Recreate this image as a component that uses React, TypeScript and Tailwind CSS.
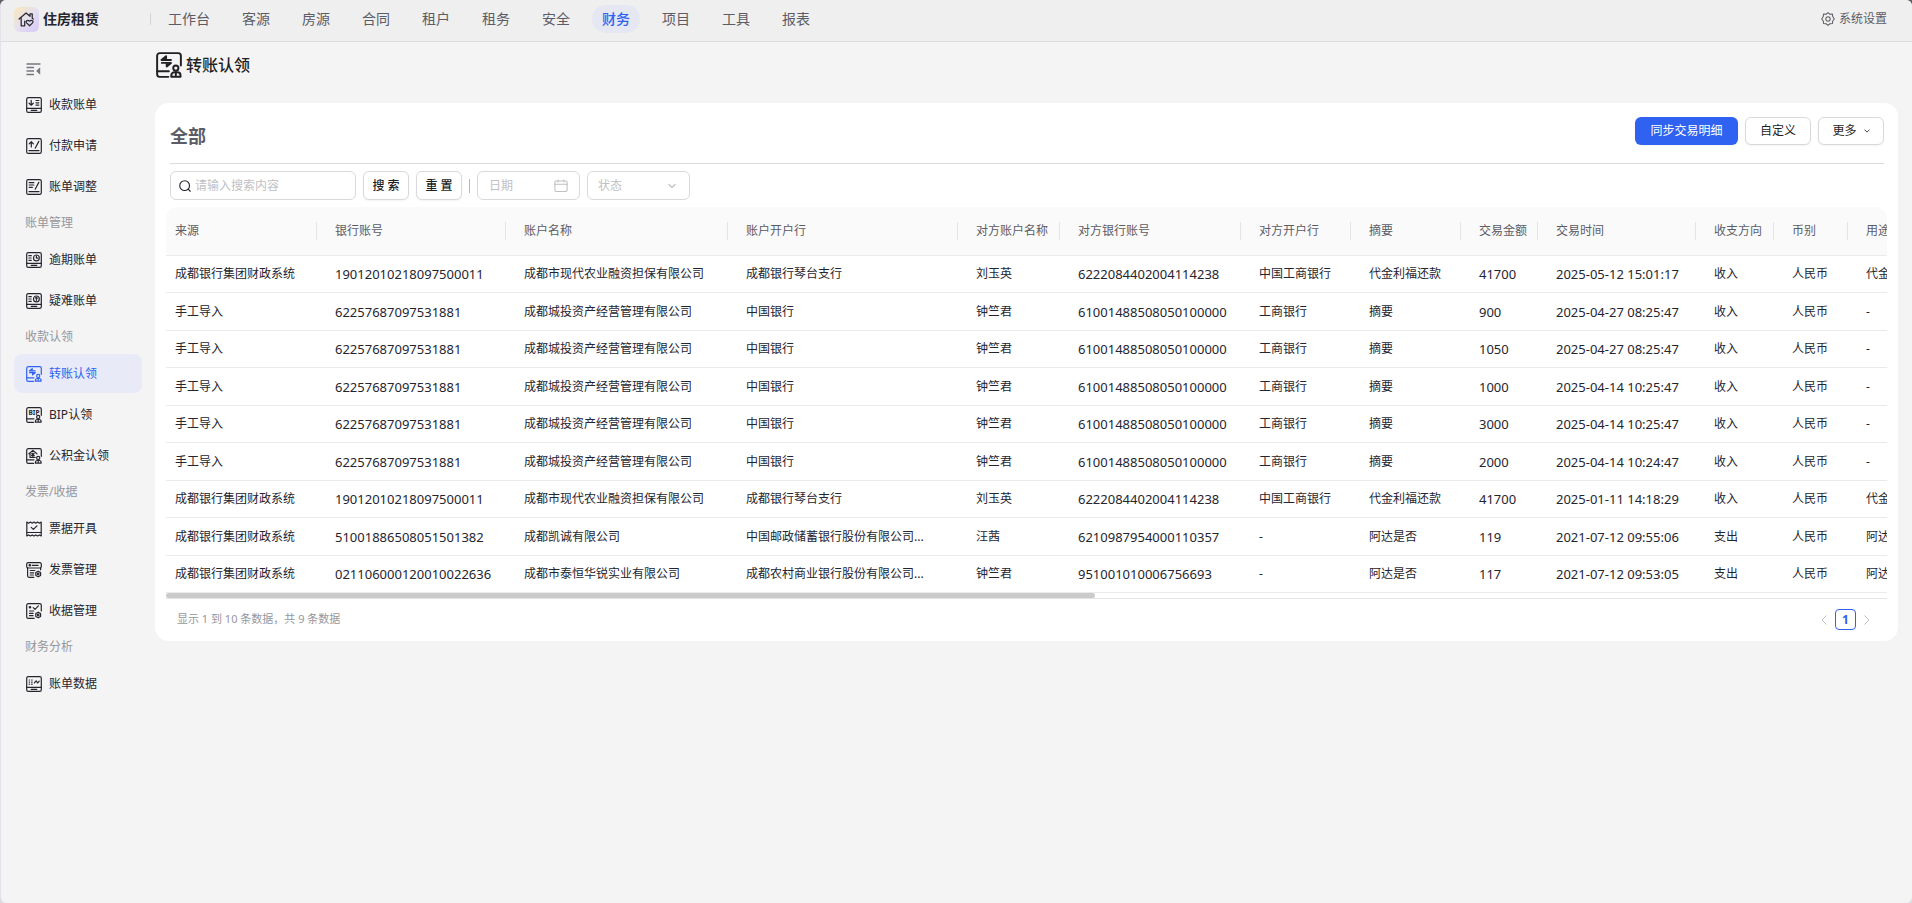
import React from "react";

interface IconProps {
  className?: string;
}

type IconComponent = React.FC<IconProps>;

interface MenuItem {
  label: string;
  icon: IconComponent;
  active?: boolean;
}

interface MenuGroup {
  title?: string;
  items: MenuItem[];
}

// Base for the line icons, drawn on a 16 unit grid
const Svg: React.FC<IconProps & { children: React.ReactNode }> = ({ className, children }) => (
  <svg
    viewBox="0 0 16 16"
    fill="none"
    stroke="currentColor"
    strokeWidth="1.2"
    strokeLinecap="round"
    strokeLinejoin="round"
    aria-hidden="true"
    className={className}
  >
    {children}
  </svg>
);

const BillFrame = () => (
  <>
    <rect x="0.7" y="0.7" width="14.6" height="14.6" rx="1.6" />
    <path d="M0.7 11.3h14.6M5.2 13.3h5.6" />
  </>
);

const NoteFrame = () => (
  <>
    <rect x="0.7" y="0.7" width="14.6" height="14.6" rx="1.6" />
    <path d="M3 12.6h10M9.2 10.2l3.6-6.8" />
  </>
);

const Person = () => (
  <>
    <circle cx="12.2" cy="9.9" r="1.6" />
    <path d="M9.4 15.2v-0.8c0-1.1.9-1.9 1.9-1.9h1.9c1.1 0 1.9.8 1.9 1.9v0.8zM12.2 12.8v1.3" />
  </>
);

const ClaimFrame = () => (
  <>
    <path d="M7.6 15.3H2.3A1.6 1.6 0 0 1 .7 13.7V2.3A1.6 1.6 0 0 1 2.3.7h11.4a1.6 1.6 0 0 1 1.6 1.6v6" />
    <path d="M0.7 11.8h7.2" />
    <Person />
  </>
);

const SmallGear = () => (
  <>
    <path d="M12.2 9.2l2.4 1.4v2.8l-2.4 1.4-2.4-1.4v-2.8z" />
    <circle cx="12.2" cy="12" r="0.8" />
  </>
);

const ReceiveIcon: IconComponent = ({ className }) => (
  <Svg className={className}>
    <BillFrame />
    <path d="M5.2 3.3v4.8M3.1 6.2l2.1 2 2.1-2M10 3.5h2.8M10 5.8h2.8M10 8.1h2.8" />
  </Svg>
);

const PayIcon: IconComponent = ({ className }) => (
  <Svg className={className}>
    <NoteFrame />
    <path d="M5.3 9V3.8M3.2 5.8l2.1-2.1 2.1 2.1" />
  </Svg>
);

const AdjustIcon: IconComponent = ({ className }) => (
  <Svg className={className}>
    <NoteFrame />
    <path d="M3.2 3.7h4.6M3.2 6h4.6M3.2 8.3h3.2" />
  </Svg>
);

const OverdueIcon: IconComponent = ({ className }) => (
  <Svg className={className}>
    <BillFrame />
    <path d="M2.9 3.7h2.4M2.9 6h2.2M2.9 8.3h2.4" />
    <circle cx="10.4" cy="5.9" r="2.9" />
    <path d="M10.4 4.2v1.9h1.4" />
  </Svg>
);

const DoubtIcon: IconComponent = ({ className }) => (
  <Svg className={className}>
    <BillFrame />
    <path d="M2.9 3.7h2.4M2.9 6h2.2M2.9 8.3h2.4" />
    <circle cx="10.4" cy="5.9" r="2.9" />
    <path d="M9.6 5.1c.2-.9 1.7-.8 1.6.1 0 .5-.8.6-.8 1.2M10.4 7.5v.1" />
  </Svg>
);

const TransferIcon: IconComponent = ({ className }) => (
  <Svg className={className}>
    <ClaimFrame />
    <path d="M9.2 4.9H3.4l2.8-2.3v2.1M3.6 6.7h5.6L6.6 8.9V6.900" />
  </Svg>
);

const BipIcon: IconComponent = ({ className }) => (
  <Svg className={className}>
    <ClaimFrame />
    <text
      x="8"
      y="8"
      fontSize="6.5"
      fontWeight="700"
      textAnchor="middle"
      fill="currentColor"
      stroke="none"
    >
      BIP
    </text>
  </Svg>
);

const FundIcon: IconComponent = ({ className }) => (
  <Svg className={className}>
    <ClaimFrame />
    <path d="M2.9 5.8L6.9 2.4l4 3.4M4 5.4v3.9h5.2M6.9 5v3.6M5.7 5.6l1.2 1 1.2-1M5.6 7.4h2.6" />
  </Svg>
);

const TicketIcon: IconComponent = ({ className }) => (
  <Svg className={className}>
    <path d="M.8 14.9V1.1l1.8 1.1 1.8-1.1 1.8 1.1L8 1.1l1.8 1.1 1.8-1.1 1.8 1.1 1.8-1.1v13.8l-1.8-1-1.8 1-1.8-1-1.8 1-1.8-1-1.8 1-1.8-1z" />
    <path d="M.8 11.5h14.4M5.2 6.4l2.2 2 3.6-3.6" />
  </Svg>
);

const InvoiceIcon: IconComponent = ({ className }) => (
  <Svg className={className}>
    <rect x="0.7" y="0.7" width="14.6" height="5.3" rx="1.6" />
    <circle cx="3.8" cy="3.3" r="0.7" />
    <path d="M6.2 3.3h6M1.6 6v7.6A1.6 1.6 0 0 0 3.2 15.3h4.6M14.6 6v1.8M4.2 8.5h4.6M4.2 10.8h3.6M4.2 13h3.2" />
    <SmallGear />
  </Svg>
);

const ReceiptIcon: IconComponent = ({ className }) => (
  <Svg className={className}>
    <path d="M8.2 15.3H2.3A1.6 1.6 0 0 1 .7 13.7V2.3A1.6 1.6 0 0 1 2.3.7h11.4a1.6 1.6 0 0 1 1.6 1.6v5.6" />
    <circle cx="4" cy="4.2" r="0.7" />
    <path d="M7.2 4.6l1.8 1.7 3.4-3.4M3.5 8h4.2M3.5 10.4h3.6M3.5 12.7h3.6" />
    <SmallGear />
  </Svg>
);

const StatsIcon: IconComponent = ({ className }) => (
  <Svg className={className}>
    <BillFrame />
    <path d="M3.2 4h.4M5.6 4h.6M3.2 6.1h.4M5.6 6.1h.6M3.2 8.2h.4M5.6 8.2h.6M8.4 6.8l1.7-2 1.6 2.2 1.5-1.9" />
  </Svg>
);

const GearIcon: IconComponent = ({ className }) => (
  <Svg className={className}>
    <path d="M8 .8l2.2 1.8 2.9-.3.3 2.900L15.200 8l-1.800 2.300-.300 2.800-2.900.300L8 15.200l-2.200-1.800-2.900-.300-.300-2.800L.8 8l1.800-2.800.300-2.900 2.900.300z" />
    <circle cx="8" cy="8" r="2.5" />
  </Svg>
);

const ChevronIcon: IconComponent = ({ className }) => (
  <Svg className={className}>
    <path strokeWidth="2.2" d="M2 5l6 6 6-6" />
  </Svg>
);

const PageArrow: IconComponent = ({ className }) => (
  <svg viewBox="0 0 6 10" fill="none" stroke="currentColor" aria-hidden="true" className={className}>
    <path d="M5.500 0.500L1 5l4.500 4.500" />
  </svg>
);

const LogoIcon: IconComponent = ({ className }) => (
  <Svg className={className}>
    <path d="M1 7.6L7.6 1.9l3.7 3.1V2.6h2.1v4.300l.9.7M3 6.6v7.300h3.300V9.600" />
    <path d="M10.9 13.9L8.100 11.200c-1.200-1.500.7-3.500 2.800-1.600 2.100-1.900 4 .1 2.800 1.600z" />
  </Svg>
);

const NAV = ["工作台", "客源", "房源", "合同", "租户", "租务", "安全", "财务", "项目", "工具", "报表"];

const MENU: MenuGroup[] = [
  {
    items: [
      { label: "收款账单", icon: ReceiveIcon },
      { label: "付款申请", icon: PayIcon },
      { label: "账单调整", icon: AdjustIcon },
    ],
  },
  {
    title: "账单管理",
    items: [
      { label: "逾期账单", icon: OverdueIcon },
      { label: "疑难账单", icon: DoubtIcon },
    ],
  },
  {
    title: "收款认领",
    items: [
      { label: "转账认领", icon: TransferIcon, active: true },
      { label: "BIP认领", icon: BipIcon },
      { label: "公积金认领", icon: FundIcon },
    ],
  },
  {
    title: "发票/收据",
    items: [
      { label: "票据开具", icon: TicketIcon },
      { label: "发票管理", icon: InvoiceIcon },
      { label: "收据管理", icon: ReceiptIcon },
    ],
  },
  {
    title: "财务分析",
    items: [{ label: "账单数据", icon: StatsIcon }],
  },
];

interface Column {
  title: string;
  width: string;
  numeric?: boolean;
}

const COLUMNS: Column[] = [
  { title: "来源", width: "w-[151px]" },
  { title: "银行账号", width: "w-[189px]", numeric: true },
  { title: "账户名称", width: "w-[222px]" },
  { title: "账户开户行", width: "w-[230px]" },
  { title: "对方账户名称", width: "w-[102px]" },
  { title: "对方银行账号", width: "w-[181px]", numeric: true },
  { title: "对方开户行", width: "w-[110px]" },
  { title: "摘要", width: "w-[110px]" },
  { title: "交易金额", width: "w-[77px]", numeric: true },
  { title: "交易时间", width: "w-[158px]", numeric: true },
  { title: "收支方向", width: "w-[78px]" },
  { title: "币别", width: "w-[74px]" },
  { title: "用途", width: "w-[160px]" },
];

const GROUP = "成都银行集团财政系统";
const CITY_INVEST = "成都城投资产经营管理有限公司";
const AGRI = "成都市现代农业融资担保有限公司";

const manualRow = (amount: string, time: string) => [
  "手工导入", "62257687097531881", CITY_INVEST, "中国银行", "钟竺君", "61001488508050100000",
  "工商银行", "摘要", amount, time, "收入", "人民币", "-",
];

const ROWS: string[][] = [
  [GROUP, "19012010218097500011", AGRI, "成都银行琴台支行", "刘玉英", "6222084402004114238", "中国工商银行", "代金利福还款", "41700", "2025-05-12 15:01:17", "收入", "人民币", "代金利福还款"],
  manualRow("900", "2025-04-27 08:25:47"),
  manualRow("1050", "2025-04-27 08:25:47"),
  manualRow("1000", "2025-04-14 10:25:47"),
  manualRow("3000", "2025-04-14 10:25:47"),
  manualRow("2000", "2025-04-14 10:24:47"),
  [GROUP, "19012010218097500011", AGRI, "成都银行琴台支行", "刘玉英", "6222084402004114238", "中国工商银行", "代金利福还款", "41700", "2025-01-11 14:18:29", "收入", "人民币", "代金利福还款"],
  [GROUP, "51001886508051501382", "成都凯诚有限公司", "中国邮政储蓄银行股份有限公司...", "汪茜", "6210987954000110357", "-", "阿达是否", "119", "2021-07-12 09:55:06", "支出", "人民币", "阿达是否"],
  [GROUP, "021106000120010022636", "成都市泰恒华锐实业有限公司", "成都农村商业银行股份有限公司...", "钟竺君", "951001010006756693", "-", "阿达是否", "117", "2021-07-12 09:53:05", "支出", "人民币", "阿达是否"],
];

const TopBar = () => (
  <header className="flex h-[42px] items-center border-b border-[#dcdcde] bg-[#efefef] pb-[3px] pl-[13px] pr-[25px]">
    <div className="flex items-center gap-1">
      <span className="flex size-[25px] items-center justify-center rounded-md bg-linear-to-br from-[#fbe7b5] via-[#e6e0f0] to-[#d3c8f6] text-[#2b2b33]">
        <LogoIcon className="size-[17px]" />
      </span>
      <span className="w-[108px] border-r border-[#d5d5d8] text-sm leading-3 font-bold text-[#25252f]">住房租赁</span>
    </div>
    <nav className="flex items-center gap-3 pl-[7px]">
      {NAV.map((item) =>
        item === "财务" ? (
          <a key={item} href="#" className="flex h-7 items-center rounded-full bg-[#e5e8f2] px-[10px] text-sm font-medium text-[#2f62f0]">
            {item}
          </a>
        ) : (
          <a key={item} href="#" className="flex h-7 items-center px-[10px] text-sm text-[#5c5c66]">
            {item}
          </a>
        ),
      )}
    </nav>
    <a href="#" className="ml-auto flex items-center gap-1 text-xs text-[#5c5c66]">
      <GearIcon className="size-[14px]" />
      系统设置
    </a>
  </header>
);

const Sidebar = () => (
  <aside className="w-[154px] shrink-0 px-[13px] pt-5">
    <button type="button" aria-label="收起菜单" className="mb-[9px] ml-3 flex h-[14px] w-[15px] items-center text-[#777782]">
      <svg viewBox="0 0 15 13" className="h-[13px] w-[15px]" fill="none" stroke="currentColor" strokeWidth="1.6">
        <path d="M0.500 1h14M0.500 4.500h7.500M0.500 8h7.500M0.500 11.500h7.500" />
        <path d="M14.200 4.200v7.600L10.200 8z" fill="currentColor" stroke="none" />
      </svg>
    </button>
    <nav className="flex flex-col gap-0.5">
      {MENU.map((group, i) => (
        <div key={i} className="flex flex-col gap-0.5">
          {group.title && (
            <h2 className="flex h-[30px] items-center pl-[11px] text-xs text-[#96969c]">{group.title}</h2>
          )}
          {group.items.map(({ label, icon: Icon, active }) => (
            <a
              key={label}
              href="#"
              className={`flex h-[39px] items-center gap-[7px] rounded-lg pl-3 text-xs ${
                active ? "bg-[#e8ebf7] text-[#2f62f0]" : "text-[#25252f]"
              }`}
            >
              <Icon className="size-4 shrink-0" />
              {label}
            </a>
          ))}
        </div>
      ))}
    </nav>
  </aside>
);

const Filters = () => (
  <form className="ml-1 flex items-center gap-[7px] pt-[7px]" onSubmit={(e) => e.preventDefault()}>
    <label className="flex h-[29px] w-[186px] items-center gap-1 rounded-md border border-[#d9d9dc] px-2">
      <Svg className="size-3 shrink-0 text-[#25252f]">
        <circle cx="7.5" cy="7.5" r="6.5" strokeWidth="1.5" />
        <path d="M12.2 12.2l2.8 2.8" strokeWidth="1.5" />
      </Svg>
      <input
        type="text"
        aria-label="搜索"
        placeholder="请输入搜索内容"
        className="w-full min-w-0 bg-transparent text-xs outline-none placeholder:text-[#bfbfc4]"
      />
    </label>
    <button type="submit" className="h-[29px] w-[46px] rounded-md border border-[#d9d9dc] bg-white text-xs font-medium text-[#1f1f24] shadow-xs">
      搜 索
    </button>
    <button type="reset" className="h-[29px] w-[46px] rounded-md border border-[#d9d9dc] bg-white text-xs font-medium text-[#1f1f24] shadow-xs">
      重 置
    </button>
    <span className="h-[14px] w-px bg-[#b5b5b8]" />
    <label className="flex h-[29px] w-[103px] items-center rounded-md border border-[#d9d9dc] px-[11px]">
      <input
        type="text"
        aria-label="日期"
        placeholder="日期"
        className="w-full min-w-0 bg-transparent text-xs outline-none placeholder:text-[#bfbfc4]"
      />
      <Svg className="size-[14px] shrink-0 text-[#bfbfc4]">
        <rect x="1" y="2.2" width="14" height="12" rx="1.5" />
        <path d="M1 6h14M4.6 1v2.4M11.4 1v2.4" />
      </Svg>
    </label>
    <label className="flex h-[29px] w-[103px] items-center rounded-md border border-[#d9d9dc] pl-[10px] pr-[13px]">
      <select aria-label="状态" className="w-full appearance-none bg-transparent text-xs text-[#bfbfc4] outline-none">
        <option>状态</option>
      </select>
      <ChevronIcon className="size-[8px] shrink-0 text-[#bfbfc4]" />
    </label>
  </form>
);

const DataTable = () => (
  <div className="mt-[7px] border-b border-[#e4e4e6]">
    <div className="overflow-x-auto rounded-t-xl [scrollbar-width:none]">
      <table className="w-full min-w-[1842px] table-fixed border-separate border-spacing-0 text-left">
        <thead>
          <tr className="h-[49px] bg-[#fafafa]">
            {COLUMNS.map((col, i) => (
              <th
                key={col.title}
                className={`${col.width} border-b border-[#ebebed] p-0 text-xs font-normal whitespace-nowrap text-[#5c5c66]`}
              >
                <div
                  className={`flex h-[18px] items-center border-r border-[#e4e4e6] ${i === 0 ? "pl-[9px]" : "pl-[18px]"}`}
                >
                  {col.title}
                </div>
              </th>
            ))}
          </tr>
        </thead>
        <tbody>
          {ROWS.map((row, r) => (
            <tr key={r} className="odd:h-[37px] even:h-[38px]">
              {row.map((cell, c) => (
                <td
                  key={c}
                  className={`border-b border-[#ebebed] py-0 pr-0 leading-5 whitespace-nowrap text-[#25252f] ${
                    c === 0 ? "pl-[9px]" : "pl-[18px]"
                  } ${COLUMNS[c].numeric ? "text-[13px]" : "text-xs"}`}
                >
                  {cell}
                </td>
              ))}
            </tr>
          ))}
        </tbody>
      </table>
    </div>
    <div className="h-[5px]">
      <div className="h-full w-[54%] rounded-full bg-[#cbcbcb]" />
    </div>
  </div>
);

const Pager = () => (
  <footer className="flex items-center justify-between pt-[10px] pb-[11px] pl-[11px] pr-[17px]">
    <p className="text-[11px] text-[#96969c]">显示 1 到 10 条数据，共 9 条数据</p>
    <div className="flex items-center gap-2">
      <button type="button" aria-label="上一页" className="text-[#bfbfc4]">
        <PageArrow className="h-[10px] w-[6px]" />
      </button>
      <button type="button" className="size-[21px] rounded-sm border border-[#2f62f0] text-xs leading-4 font-bold text-[#2f62f0]">
        1
      </button>
      <button type="button" aria-label="下一页" className="text-[#bfbfc4]">
        <PageArrow className="h-[10px] w-[6px] rotate-180" />
      </button>
    </div>
  </footer>
);

export default function App() {
  return (
    <div className="min-h-screen bg-linear-to-b from-[#5f5f66] to-[#dcdce0] font-['Noto_Sans','Noto_Sans_CJK_SC',sans-serif]">
      <div className="flex min-h-screen flex-col overflow-hidden rounded-md border-l border-[#e2e2e8] bg-[#f4f4f4]">
        <TopBar />
        <div className="flex flex-1">
          <Sidebar />
          <main className="min-w-0 flex-1 pr-[14px] pt-[10px]">
            <h1 className="flex h-[26px] items-center gap-1 pl-px text-base font-medium text-[#1f1f24]">
              <TransferIcon className="size-[26px]" />
              转账认领
            </h1>
            <section className="mt-[25px] rounded-[14px] bg-white px-[11px]">
              <div className="ml-1 mr-[3px] flex h-[61px] justify-between border-b border-[#dcdcde] pt-[14px]">
                <h2 className="mt-[5px] text-lg leading-7 font-bold text-[#5c5c66]">全部</h2>
                <div className="flex gap-[7px]">
                  <button type="button" className="h-7 w-[103px] rounded-md bg-[#2f62f0] text-xs text-white shadow-xs">
                    同步交易明细
                  </button>
                  <button type="button" className="h-7 w-[66px] rounded-md border border-[#d9d9dc] bg-white text-xs text-[#1f1f24] shadow-xs">
                    自定义
                  </button>
                  <button
                    type="button"
                    className="flex h-7 w-[66px] items-center justify-center gap-[7px] rounded-md border border-[#d9d9dc] bg-white text-xs text-[#1f1f24] shadow-xs"
                  >
                    更多
                    <ChevronIcon className="size-[6px]" />
                  </button>
                </div>
              </div>
              <Filters />
              <DataTable />
              <Pager />
            </section>
          </main>
        </div>
      </div>
    </div>
  );
}
